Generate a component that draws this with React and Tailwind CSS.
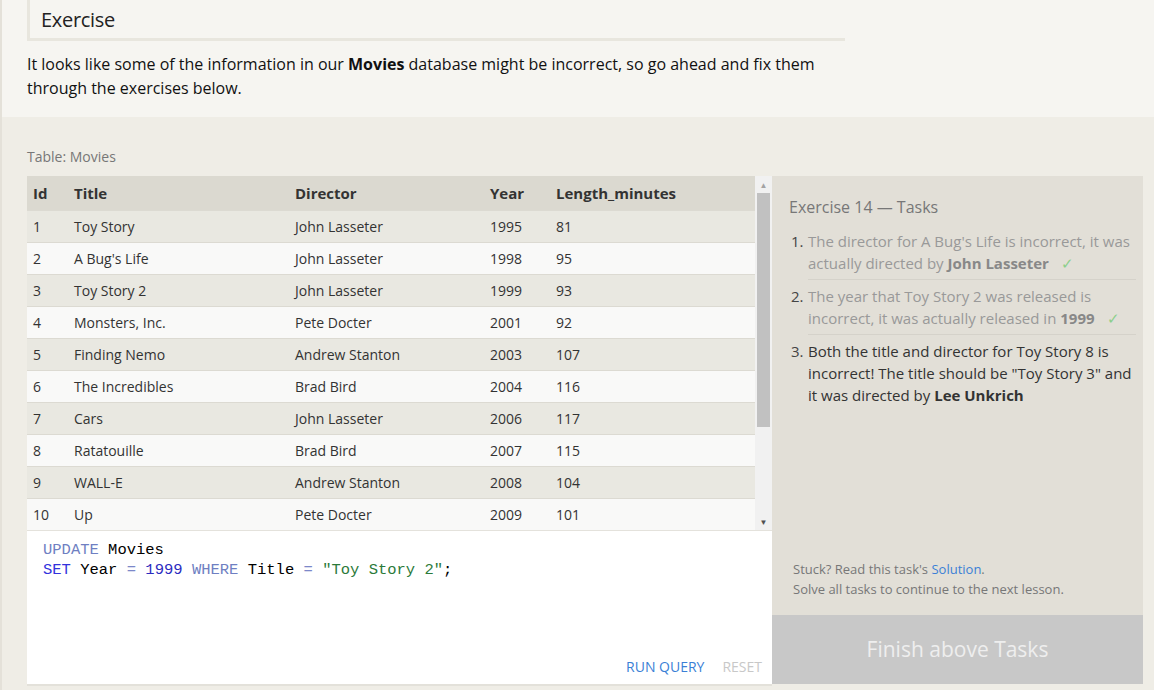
import React from 'react';

const movies = [
    [1, 'Toy Story', 'John Lasseter', 1995, 81],
    [2, "A Bug's Life", 'John Lasseter', 1998, 95],
    [3, 'Toy Story 2', 'John Lasseter', 1999, 93],
    [4, 'Monsters, Inc.', 'Pete Docter', 2001, 92],
    [5, 'Finding Nemo', 'Andrew Stanton', 2003, 107],
    [6, 'The Incredibles', 'Brad Bird', 2004, 116],
    [7, 'Cars', 'John Lasseter', 2006, 117],
    [8, 'Ratatouille', 'Brad Bird', 2007, 115],
    [9, 'WALL-E', 'Andrew Stanton', 2008, 104],
    [10, 'Up', 'Pete Docter', 2009, 101],
];

function Row({ cells, even }) {
    return (
        <div className={`flex h-[32px] items-center border-t border-[#dcdad2] text-[14px] text-[#333] ${even ? 'bg-[#f9f9f8]' : 'bg-[#e9e8e1]'}`}>
            <div className="w-[47px] pl-[6px]">{cells[0]}</div>
            <div className="w-[221px]">{cells[1]}</div>
            <div className="w-[195px]">{cells[2]}</div>
            <div className="w-[66px]">{cells[3]}</div>
            <div className="flex-1">{cells[4]}</div>
        </div>
    );
}

const Check = () => <span className="ml-[12px] text-[#8ccf8c]">✓</span>;

export default function App() {
    return (
        <div className="w-full h-[690px] overflow-hidden border-l-2 border-[#e4e1d9] font-['Open_Sans',sans-serif]">
            {/* lesson intro */}
            <div className="bg-[#f6f5f1] h-[117px] pl-[25px]">
                <div className="w-[818px] h-[41px] border-l-[3px] border-b-[3px] border-[#e8e6de] flex items-end pb-[8px] pl-[11px]">
                    <h2 className="text-[20px] leading-none text-[#222] tracking-[-0.3px]">Exercise</h2>
                </div>
                <p className="mt-[11px] w-[820px] text-[16px] leading-[24px] text-[#111]">
                    It looks like some of the information in our <b>Movies</b> database might be incorrect, so go ahead and fix them through the exercises below.
                </p>
            </div>

            {/* exercise area */}
            <div className="bg-[#efede6] h-[573px] pl-[25px] pr-[11px]">
                <div className="pt-[29px] h-[59px] text-[14px] text-[#777]">Table: Movies</div>
                <div className="flex">
                    <div className="w-[745px] flex flex-col">
                        <div className="flex h-[354px]">
                            <div className="flex-1">
                                <div className="flex h-[34px] items-center bg-[#dbd9d0] text-[15px] font-bold text-[#333]">
                                    <div className="w-[47px] pl-[6px]">Id</div>
                                    <div className="w-[221px]">Title</div>
                                    <div className="w-[195px]">Director</div>
                                    <div className="w-[66px]">Year</div>
                                    <div className="flex-1">Length_minutes</div>
                                </div>
                                {movies.map((m, i) => (
                                    <Row key={m[0]} cells={m} even={i % 2 === 1} />
                                ))}
                            </div>
                            {/* scrollbar */}
                            <div className="w-[17px] bg-[#f1f1f1] flex flex-col items-center">
                                <div className="h-[17px] flex items-center justify-center text-[8px] text-[#a3a3a3]">▲</div>
                                <div className="w-[13px] h-[234px] bg-[#c1c1c1]" />
                                <div className="flex-1" />
                                <div className="h-[17px] flex items-center justify-center text-[8px] text-[#505050]">▼</div>
                            </div>
                        </div>
                        {/* editor */}
                        <div className="h-[156px] bg-white border-t border-[#e4e2dc] border-b-2 border-b-[#e3e1da] flex flex-col">
                            <pre className="pt-[9px] pl-[16px] font-['Liberation_Mono',monospace] text-[15.5px] leading-[20px] text-black">
                                <span className="text-[#6f7fc2]">UPDATE</span> Movies{'\n'}
                                <span className="text-[#3232dc]">SET</span> Year <span className="text-[#7c88c9]">=</span> <span className="text-[#2b2bc0]">1999</span> <span className="text-[#6f7fc2]">WHERE</span> Title <span className="text-[#7c88c9]">=</span> <span className="text-[#2b7a3a]">"Toy Story 2"</span>;
                            </pre>
                            <div className="mt-auto mb-[7px] flex justify-end gap-[18px] pr-[10px] text-[14px]">
                                <span className="text-[#3b7fd6]">RUN QUERY</span>
                                <span className="text-[#c8c8c8]">RESET</span>
                            </div>
                        </div>
                    </div>

                    {/* tasks panel */}
                    <div className="w-[371px] h-[508px] bg-[#e2dfd7] flex flex-col">
                        <div className="flex-1 pl-[17px] pr-[7px] pt-[19px]">
                            <h3 className="text-[16px] text-[#777]">Exercise 14 — Tasks</h3>
                            <ol className="mt-[11px] text-[15px] leading-[22px]">
                                <li className="flex pb-[5px]">
                                    <span className="w-[19px] shrink-0 pl-[2px] text-[#444]">1.</span>
                                    <span className="text-[#999] border-b border-[#d5d2ca] pb-[5px] flex-1">
                                        The director for A Bug's Life is incorrect, it was actually directed by <b className="text-[#888]">John Lasseter</b><Check />
                                    </span>
                                </li>
                                <li className="flex pb-[5px]">
                                    <span className="w-[19px] shrink-0 pl-[2px] text-[#444]">2.</span>
                                    <span className="text-[#999] border-b border-[#d5d2ca] pb-[5px] flex-1">
                                        The year that Toy Story 2 was released is incorrect, it was actually released in <b className="text-[#888]">1999</b><Check />
                                    </span>
                                </li>
                                <li className="flex">
                                    <span className="w-[19px] shrink-0 pl-[2px] text-[#444]">3.</span>
                                    <span className="text-[#333] flex-1">
                                        Both the title and director for Toy Story 8 is incorrect! The title should be "Toy Story 3" and it was directed by <b>Lee Unkrich</b>
                                    </span>
                                </li>
                            </ol>
                        </div>
                        <div className="pl-[21px] pb-[16px] text-[13px] leading-[20px] text-[#777]">
                            <p>Stuck? Read this task's <span className="text-[#3b7fd6]">Solution</span>.</p>
                            <p>Solve all tasks to continue to the next lesson.</p>
                        </div>
                        <div className="h-[69px] bg-[#c8c8c8] flex items-center justify-center text-[21px] text-[#eeeeee]">
                            Finish above Tasks
                        </div>
                    </div>
                </div>
            </div>
        </div>
    );
}
